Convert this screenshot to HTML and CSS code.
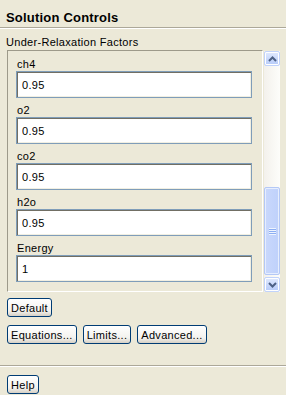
FILE: index.html
```html
<!DOCTYPE html>
<html lang="en">
<head>
  <meta charset="UTF-8">
  <title>Solution Controls</title>
  <link rel="stylesheet" href="styles.css">
</head>
<body>
  <div class="header">Solution Controls</div>

  <div class="group-label">Under-Relaxation Factors</div>
  <div class="group">
    <div class="panel">
      <div class="field">
        <label for="ch4">ch4</label>
        <input type="text" id="ch4" value="0.95">
      </div>
      <div class="field">
        <label for="o2">o2</label>
        <input type="text" id="o2" value="0.95">
      </div>
      <div class="field">
        <label for="co2">co2</label>
        <input type="text" id="co2" value="0.95">
      </div>
      <div class="field">
        <label for="h2o">h2o</label>
        <input type="text" id="h2o" value="0.95">
      </div>
      <div class="field">
        <label for="energy">Energy</label>
        <input type="text" id="energy" value="1">
      </div>
    </div>

    <div class="scrollbar">
      <div class="sb-btn">
        <svg width="9" height="6" viewBox="0 0 9 6"><path d="M1 5 L4.5 1.5 L8 5" fill="none" stroke="#4d6185" stroke-width="2"/></svg>
      </div>
      <div class="sb-track">
        <div class="sb-thumb"><span class="grip"></span></div>
      </div>
      <div class="sb-btn">
        <svg width="9" height="6" viewBox="0 0 9 6"><path d="M1 1 L4.5 4.5 L8 1" fill="none" stroke="#4d6185" stroke-width="2"/></svg>
      </div>
    </div>
  </div>

  <div class="buttons">
    <div class="row"><button>Default</button></div>
    <div class="row"><button>Equations...</button><button>Limits...</button><button>Advanced...</button></div>
  </div>

  <div class="footer">
    <button>Help</button>
  </div>
</body>
</html>
```

FILE: styles.css
```css
body { margin: 0; background: #ece9d8; font-family: "Liberation Sans", Arial, sans-serif; font-size: 11px; letter-spacing: 0.3px; color: #000; width: 286px; height: 395px; overflow: hidden; }

.header { font-size: 13px; font-weight: bold; letter-spacing: 0.2px; line-height: 15px; padding: 10px 6px 2px; border-bottom: 1px solid #aca899; box-shadow: 0 1px 0 #fff; }

.group-label { margin: 8px 0 0 6px; line-height: 13px; }
.group { display: flex; gap: 1px; margin: 1px 0 0 7px; }

.panel { width: 254px; padding: 1px 0 9px; border: 1px solid; border-color: #9d9a8a #fff #fff #9d9a8a; }
.field { margin-top: 6px; padding-left: 8px; }
.field label { display: block; line-height: 13px; padding-left: 1px; }
.field input { display: block; box-sizing: border-box; width: 236px; height: 27px; margin: 0; padding: 0 0 0 5px; border: 1px solid #7f9db9; box-shadow: inset 1px 1px 0 #716f64, inset -1px -1px 0 #f1efe2; background: #fff; font: 11px "Liberation Sans", Arial, sans-serif; letter-spacing: 0.3px; color: #000; outline: none; }

.scrollbar { width: 16px; margin-top: 1px; height: 241px; display: flex; flex-direction: column; background: linear-gradient(to right, #f3f1ec, #fdfdfa); }
.sb-btn { height: 15px; box-sizing: border-box; border: 1px solid #c1d3fb; border-radius: 2px; background: linear-gradient(#e1eafe, #b6cbf9); display: flex; align-items: center; justify-content: center; box-shadow: inset 0 0 0 1px #fff; }
.sb-track { flex: 1; display: flex; flex-direction: column; justify-content: flex-end; padding-bottom: 2px; }
.sb-thumb { height: 88px; box-sizing: border-box; border: 1px solid #b4c8f6; border-radius: 2px; background: linear-gradient(to right, #c9d8fc, #bfd1fb); display: flex; align-items: center; justify-content: center; box-shadow: inset 0 0 0 1px #e6eefe; }
.grip { width: 7px; height: 7px; background: repeating-linear-gradient(#eef4fe 0 1px, #8caef2 1px 2px); }

.buttons { padding: 6px 7px 8px; }
.row { display: flex; gap: 6px; }
.row + .row { margin-top: 8px; }
button { height: 19px; padding: 0 3px; border: 1px solid #003c74; border-radius: 3px; background: linear-gradient(#ffffff, #f3f2ee 70%, #d6d0c5); font: 11px "Liberation Sans", Arial, sans-serif; letter-spacing: 0.3px; color: #000; }

.footer { margin-top: 13px; padding: 9px 7px 0; border-top: 1px solid #aca899; box-shadow: inset 0 1px 0 #fff; }
```
